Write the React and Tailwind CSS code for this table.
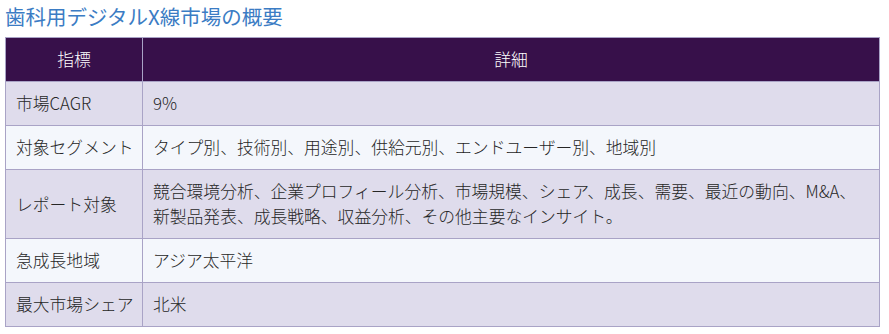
const rows = [
  { label: "市場CAGR", detail: ["9%"] },
  { label: "対象セグメント", detail: ["タイプ別、技術別、用途別、供給元別、エンドユーザー別、地域別"] },
  {
    label: "レポート対象",
    detail: [
      "競合環境分析、企業プロフィール分析、市場規模、シェア、成長、需要、最近の動向、M&A、",
      "新製品発表、成長戦略、収益分析、その他主要なインサイト。",
    ],
  },
  { label: "急成長地域", detail: ["アジア太平洋"] },
  { label: "最大市場シェア", detail: ["北米"] },
];

export default function App() {
  return (
    <div
      className="w-[889px] h-[334px] bg-white px-[5px] pt-[3px]"
      style={{ fontFamily: '"Noto Sans CJK JP", "Noto Sans", sans-serif' }}
    >
      <h2 className="text-[20.5px] leading-[26px] text-[#3b7cc4] font-normal">
        歯科用デジタルX線市場の概要
      </h2>
      <table className="mt-[8px] w-[875px] table-fixed border-collapse text-[16.8px] leading-[25px] text-[#262626] font-light">
        <colgroup>
          <col className="w-[137px]" />
          <col />
        </colgroup>
        <thead>
          <tr className="bg-[#37104a] text-white">
            <th className="border border-[#a9a3c6] py-[9px] font-light text-center">指標</th>
            <th className="border border-[#a9a3c6] py-[9px] font-light text-center">詳細</th>
          </tr>
        </thead>
        <tbody>
          {rows.map((r, i) => (
            <tr key={r.label} className={i % 2 === 0 ? "bg-[#dfdcec]" : "bg-[#f4f7fc]"}>
              <td className="border border-[#a9a3c6] pl-[10px] pr-0 py-[9px] align-middle whitespace-nowrap">{r.label}</td>
              <td className="border border-[#a9a3c6] px-[10px] py-[9px] align-middle">
                {r.detail.map((line, j) => (
                  <div key={j} className="whitespace-nowrap">{line}</div>
                ))}
              </td>
            </tr>
          ))}
        </tbody>
      </table>
    </div>
  );
}
